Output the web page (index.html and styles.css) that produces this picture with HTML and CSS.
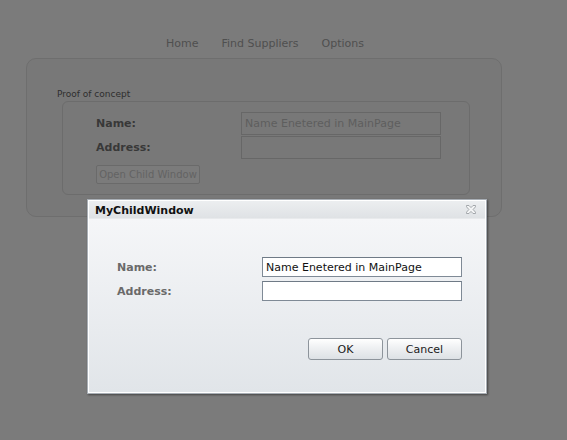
FILE: index.html
```html
<!DOCTYPE html>
<html>
<head>
<meta charset="utf-8">
<title>Proof of concept</title>
<link rel="stylesheet" href="styles.css">
</head>
<body>
<div class="page">
  <nav class="nav">
    <a class="nav-link">Home</a>
    <a class="nav-link">Find Suppliers</a>
    <a class="nav-link">Options</a>
  </nav>
  <section class="panel">
    <div class="group-label">Proof of concept</div>
    <div class="group-box">
      <div class="form">
        <label class="main-label">Name:</label>
        <div class="main-input">Name Enetered in MainPage</div>
        <label class="main-label">Address:</label>
        <div class="main-input"></div>
      </div>
      <button class="main-button">Open Child Window</button>
    </div>
  </section>
</div>

<div class="child">
  <div class="child-title">
    <span class="child-title-text">MyChildWindow</span>
    <svg class="close" width="10" height="9" viewBox="0 0 10 9">
      <path d="M0.5 0.5 H3 L5 2.6 L7 0.5 H9.5 V1.8 L7.1 4.5 L9.5 7.2 V8.5 H7 L5 6.4 L3 8.5 H0.5 V7.2 L2.9 4.5 L0.5 1.8 Z" fill="#f4f5f6" stroke="#a3a7ab" stroke-width="1"/>
    </svg>
  </div>
  <div class="child-body">
    <div class="child-form">
      <label class="child-label">Name:</label>
      <div class="child-input">Name Enetered in MainPage</div>
      <label class="child-label">Address:</label>
      <div class="child-input"></div>
    </div>
    <div class="child-actions">
      <button class="child-button">OK</button>
      <button class="child-button">Cancel</button>
    </div>
  </div>
</div>
</body>
</html>
```

FILE: styles.css
```css
html, body {
  margin: 0;
  padding: 0;
}
body {
  background: #7b7b7b;
  font-family: "DejaVu Sans", Verdana, sans-serif;
  width: 567px;
  height: 440px;
  position: relative;
  overflow: hidden;
}
.page {
  padding-left: 26px;
  width: 476px;
}
.nav {
  display: flex;
  justify-content: center;
  gap: 23px;
  padding-top: 37px;
  font-size: 11px;
  line-height: 13px;
  padding-left: 2px;
}
.nav-link {
  color: #4f4f4f;
}
.panel {
  margin-top: 8px;
  box-sizing: border-box;
  width: 476px;
  height: 159px;
  border: 1px solid #6e6e6e;
  border-radius: 10px;
  background: #787878;
  padding: 30px 0 0 30px;
}
.group-label {
  font-size: 9px;
  line-height: 11px;
  color: #2e2e2e;
}
.group-box {
  margin: 1px 0 0 5px;
  box-sizing: border-box;
  width: 408px;
  height: 94px;
  border: 1px solid #6c6c6c;
  border-radius: 6px;
  padding: 10px 0 0 33px;
}
.form {
  display: grid;
  grid-template-columns: 145px 200px;
  row-gap: 1px;
  align-items: center;
}
.main-label {
  font-size: 11px;
  font-weight: bold;
  color: #383838;
}
.main-input {
  box-sizing: border-box;
  height: 23px;
  border: 1px solid #676767;
  padding: 0 3px;
  font-size: 11px;
  line-height: 21px;
  color: #5e5e5e;
}
.main-button {
  margin-top: 6px;
  box-sizing: border-box;
  width: 104px;
  height: 19px;
  border: 1px solid #6a6a6a;
  border-radius: 2px;
  background: #7b7b7b;
  font-family: "DejaVu Sans", Verdana, sans-serif;
  font-size: 10px;
  color: #636363;
  padding: 0;
}

/* child window */
.child {
  position: absolute;
  left: 87px;
  top: 199px;
  width: 400px;
  height: 195px;
  box-sizing: border-box;
  border: 1px solid #a8aeb5;
  padding: 1px;
  background: #ffffff;
  box-shadow: 1px 1px 2px rgba(0, 0, 0, 0.45);
  display: flex;
  flex-direction: column;
}
.child-title {
  height: 17px;
  flex: none;
  background: linear-gradient(#eceef0, #dfe2e5);
  border-bottom: 1px solid #e8eaec;
  display: flex;
  align-items: center;
  justify-content: space-between;
  padding: 0 9px 0 6px;
}
.child-title-text {
  font-size: 11px;
  font-weight: bold;
  color: #111111;
  line-height: 13px;
  padding-top: 1px;
}
.close {
  display: block;
}
.child-body {
  flex: 1;
  background: linear-gradient(#f5f6f8, #e1e5e9);
  padding: 38px 23px 0 28px;
}
.child-form {
  display: grid;
  grid-template-columns: 145px 200px;
  row-gap: 4px;
  align-items: center;
}
.child-label {
  font-size: 11px;
  font-weight: bold;
  color: #6a6a6a;
}
.child-input {
  box-sizing: border-box;
  height: 20px;
  border: 1px solid #7f8a96;
  border-top-color: #6f7a86;
  background: #ffffff;
  padding: 1px 3px 0;
  font-size: 11px;
  line-height: 18px;
  color: #111111;
}
.child-actions {
  display: flex;
  justify-content: flex-end;
  gap: 4px;
  margin-top: 37px;
}
.child-button {
  box-sizing: border-box;
  width: 75px;
  height: 22px;
  border: 1px solid #8d949b;
  border-radius: 3px;
  background: linear-gradient(#ffffff, #eef0f2 45%, #dde1e5);
  font-family: "DejaVu Sans", Verdana, sans-serif;
  font-size: 11px;
  color: #1a1a1a;
  padding: 0;
}
```
